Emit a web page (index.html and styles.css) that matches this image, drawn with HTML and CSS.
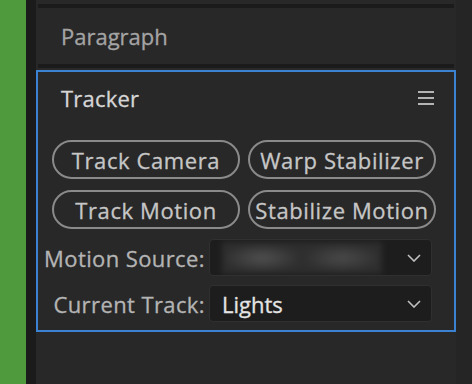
FILE: index.html
```html
<!DOCTYPE html>
<html lang="en">
<head>
    <meta charset="UTF-8">
    <title>Tracker</title>
    <link rel="stylesheet" href="styles.css">
</head>
<body>

<div class="timeline-edge"></div>
<div class="gutter"></div>

<div class="panels">
    <div class="tab-line"></div>
    <div class="tab">Paragraph</div>
    <div class="tab-line"></div>

    <div class="tracker">
        <div class="tracker-head">
            <span class="tracker-title">Tracker</span>
            <svg class="menu-icon" width="16" height="14" viewBox="0 0 16 14">
                <rect x="0" y="0" width="16" height="2" fill="#b4b4b4"/>
                <rect x="0" y="6" width="16" height="2" fill="#b4b4b4"/>
                <rect x="0" y="12" width="16" height="2" fill="#b4b4b4"/>
            </svg>
        </div>

        <div class="buttons">
            <button class="pill">Track Camera</button>
            <button class="pill">Warp Stabilizer</button>
            <button class="pill">Track Motion</button>
            <button class="pill">Stabilize Motion</button>
        </div>

        <div class="fields">
            <label class="field-label">Motion Source:</label>
            <div class="dropdown">
                <div class="blurred"></div>
                <svg class="chevron" width="14" height="8" viewBox="0 0 14 8">
                    <path d="M1 1 L7 7 L13 1" fill="none" stroke="#c0c0c0" stroke-width="1.6"/>
                </svg>
            </div>

            <label class="field-label">Current Track:</label>
            <div class="dropdown">
                <span class="dropdown-value">Lights</span>
                <svg class="chevron" width="14" height="8" viewBox="0 0 14 8">
                    <path d="M1 1 L7 7 L13 1" fill="none" stroke="#c0c0c0" stroke-width="1.6"/>
                </svg>
            </div>
        </div>
    </div>
</div>

<div class="right-edge"></div>

</body>
</html>
```

FILE: styles.css
```css
html, body {
    height: 100%;
    margin: 0;
}

body {
    display: flex;
    background-color: #282828;
    font-family: "Open Sans", sans-serif;
    -webkit-text-stroke: 0.3px currentColor; /* a touch heavier, like the app font */
    overflow: hidden;
}

.timeline-edge {
    width: 26px;
    background-color: #4f9a3c;
}

.gutter {
    width: 10px;
    background-color: #1b1b1b;
}

.panels {
    width: 420px;
    padding-top: 4px;
    background-color: #282828;
}

.right-edge {
    flex: 1;
    background-color: #252525;
}

.tab-line {
    height: 4px;
    margin: 0 2px;
    background-color: #1b1b1b;
}

.tab {
    height: 56px;
    line-height: 56px;
    padding-left: 25px;
    font-size: 22px;
    color: #a4a4a4;
}

.tracker {
    margin-top: 2px;
    border: 2px solid #3b83d2;
    padding-bottom: 8px;
}

.tracker-head {
    display: flex;
    justify-content: space-between;
    align-items: center;
    height: 52px;
    padding: 0 20px 0 23px;
}

.tracker-title {
    font-size: 22px;
    letter-spacing: 0.2px;
    color: #d6d6d6;
}

.buttons {
    display: grid;
    grid-template-columns: 188px 188px;
    column-gap: 8px;
    row-gap: 11px;
    margin-top: 16px;
    padding-left: 14px;
}

.pill {
    height: 39px;
    padding: 0;
    border: 2px solid #8a8a8a;
    border-radius: 20px;
    background-color: transparent;
    font-family: "Open Sans", sans-serif;
    font-size: 22px;
    letter-spacing: 0.6px;
    color: #c6c6c6;
    -webkit-text-stroke: 0.3px #c6c6c6;
    white-space: nowrap;
}

.fields {
    display: grid;
    grid-template-columns: 167px 223px;
    column-gap: 4px;
    row-gap: 9px;
    margin-top: 10px;
}

.field-label {
    align-self: center;
    text-align: right;
    font-size: 22px;
    letter-spacing: 0.4px;
    color: #b4b4b4;
}

.dropdown {
    display: flex;
    align-items: center;
    justify-content: space-between;
    height: 37px;
    box-sizing: border-box;
    padding: 0 10px 0 12px;
    border: 1px solid #303030;
    border-radius: 4px;
    background-color: #1d1d1d;
    overflow: hidden;
}

.blurred {
    width: 160px;
    height: 32px;
    background:
        radial-gradient(ellipse 40px 14px at 40px 16px, #505050, transparent),
        radial-gradient(ellipse 40px 14px at 120px 16px, #4a4a4a, transparent),
        #2e2e2e;
    filter: blur(3px);
}

.dropdown-value {
    font-size: 22px;
    color: #e4e4e4;
}

.chevron {
    flex-shrink: 0;
}
```
